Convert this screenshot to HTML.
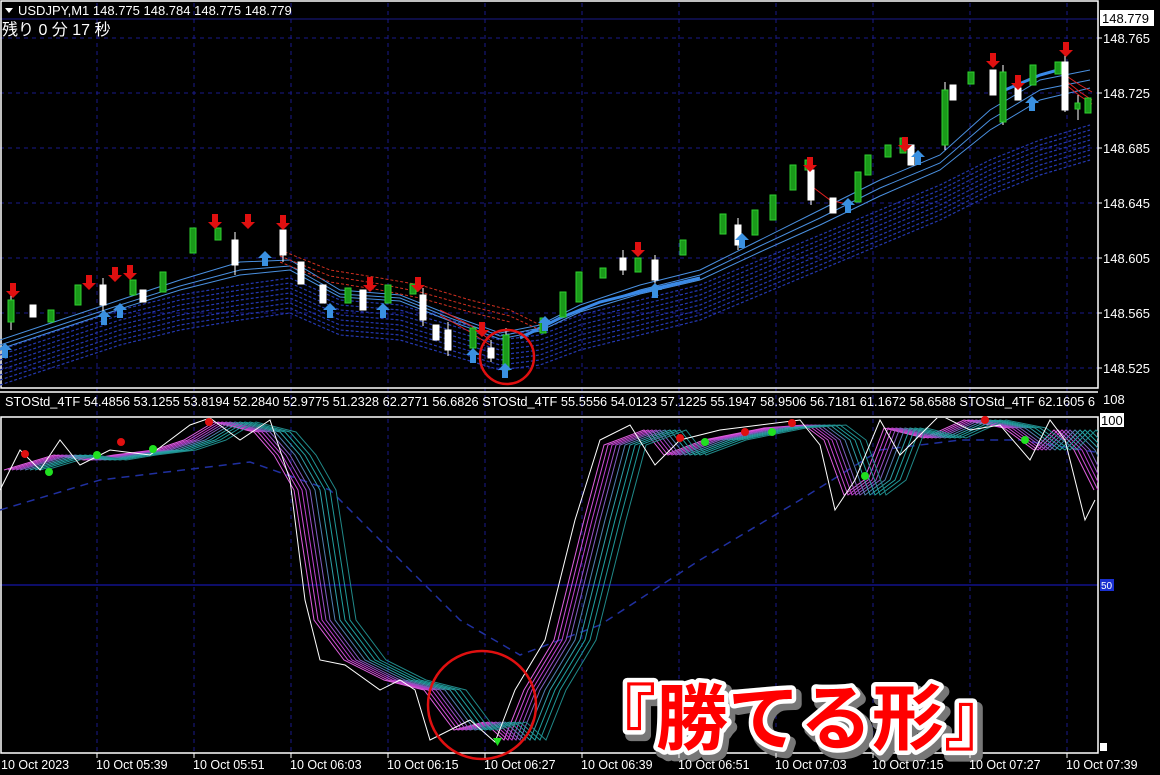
<!DOCTYPE html>
<html><head><meta charset="utf-8"><style>
html,body{margin:0;padding:0;background:#000;width:1160px;height:775px;overflow:hidden}
svg{display:block}
text{font-family:"Liberation Sans","Noto Sans CJK JP",sans-serif}
</style></head><body>
<svg width="1160" height="775" viewBox="0 0 1160 775" xmlns="http://www.w3.org/2000/svg">
<defs>
<clipPath id="ct"><rect x="0" y="2" width="1098" height="386"/></clipPath>
<clipPath id="cb"><rect x="0" y="418" width="1098" height="335"/></clipPath>
<path id="dn" d="M0,0 l-7,-7 h4 v-8 h6 v8 h4z"/>
<path id="up" d="M0,0 l-7,7 h4 v8 h6 v-8 h4z"/>
</defs>
<rect width="1160" height="775" fill="#000"/>
<g stroke="#1a1a8a" stroke-width="1" stroke-dasharray="4,4">
<line x1="97" y1="3" x2="97" y2="753"/><line x1="194" y1="3" x2="194" y2="753"/><line x1="291" y1="3" x2="291" y2="753"/><line x1="388" y1="3" x2="388" y2="753"/><line x1="485" y1="3" x2="485" y2="753"/><line x1="582" y1="3" x2="582" y2="753"/><line x1="679" y1="3" x2="679" y2="753"/><line x1="776" y1="3" x2="776" y2="753"/><line x1="873" y1="3" x2="873" y2="753"/><line x1="970" y1="3" x2="970" y2="753"/><line x1="1067" y1="3" x2="1067" y2="753"/>
<line x1="0" y1="38" x2="1098" y2="38"/><line x1="0" y1="93" x2="1098" y2="93"/><line x1="0" y1="148" x2="1098" y2="148"/><line x1="0" y1="203" x2="1098" y2="203"/><line x1="0" y1="258" x2="1098" y2="258"/><line x1="0" y1="313" x2="1098" y2="313"/><line x1="0" y1="368" x2="1098" y2="368"/>
</g>
<line x1="0" y1="19" x2="1098" y2="19" stroke="#1a1a8a"/>
<line x1="0" y1="585" x2="1098" y2="585" stroke="#1a1ad0"/>
<g stroke="#fff" stroke-width="1.5" fill="none">
<rect x="1" y="1" width="1097" height="387"/>
<rect x="1" y="417" width="1097" height="336"/>
<line x1="0" y1="392" x2="1098" y2="392"/>
</g>
<g clip-path="url(#ct)">
<g fill="none" stroke="#2438b0" stroke-width="1.2" stroke-dasharray="3,2">
<polyline id="rib" points="0,350 60,330 120,310 180,295 240,285 290,278 340,300 400,305 450,320 500,335 540,330 580,315 640,300 700,285 760,260 820,235 880,210 940,185 990,160 1040,140 1090,125"/>
<use href="#rib" y="5"/><use href="#rib" y="10"/><use href="#rib" y="15"/><use href="#rib" y="20"/><use href="#rib" y="25"/><use href="#rib" y="30"/><use href="#rib" y="35"/>
</g>
<g fill="none" stroke="#4a90e0" stroke-width="1">
<polyline points="0,340 60,320 120,300 180,280 240,262 290,260 340,290 400,295 450,315 500,333 540,325 580,305 640,285 700,270 760,240 820,210 880,180 940,155 990,110 1040,80 1090,70"/>
<polyline points="0,345 60,325 120,305 180,286 240,270 290,266 340,294 400,298 450,318 500,336 540,328 580,309 640,290 700,275 760,246 820,218 880,188 940,163 990,120 1040,90 1090,80"/>
<polyline points="0,349 60,329 120,309 180,290 240,275 290,270 340,297 400,301 450,321 500,339 540,331 580,312 640,294 700,280 760,252 820,225 880,196 940,170 990,130 1040,100 1090,88"/>
</g>
<polyline fill="none" stroke="#3a8ae8" stroke-width="3" points="520,338 560,318 600,302 640,292 700,278"/>
<polyline fill="none" stroke="#3a8ae8" stroke-width="3" points="1005,90 1040,75 1058,70"/>
<g fill="none" stroke="#d03020" stroke-width="1" stroke-dasharray="3,2">
<polyline points="280,250 330,270 380,278 420,285 470,300 510,310 540,325"/>
<polyline points="280,256 330,276 380,284 420,292 470,306 510,316 540,330"/>
<polyline points="280,262 330,282 380,290 420,298 470,312 510,322"/>
</g>
<g fill="none" stroke="#e02020" stroke-width="1">
<polyline points="1065,75 1080,85 1092,92"/><polyline points="1065,80 1080,92 1092,100"/><polyline points="1065,84 1080,96 1092,104"/><polyline points="810,185 830,200 850,205"/><polyline points="440,310 470,325 490,340"/><polyline points="440,315 470,332 490,345"/>
</g>
</g>
<g stroke="#fff" stroke-width="1">
<line x1="11" y1="292" x2="11" y2="330"/><line x1="103" y1="278" x2="103" y2="312"/><line x1="235" y1="232" x2="235" y2="275"/><line x1="283" y1="222" x2="283" y2="262"/><line x1="423" y1="288" x2="423" y2="326"/><line x1="448" y1="322" x2="448" y2="356"/><line x1="491" y1="340" x2="491" y2="362"/><line x1="506" y1="328" x2="506" y2="372"/><line x1="623" y1="250" x2="623" y2="275"/><line x1="655" y1="255" x2="655" y2="285"/><line x1="738" y1="218" x2="738" y2="250"/><line x1="811" y1="158" x2="811" y2="205"/><line x1="945" y1="82" x2="945" y2="150"/><line x1="1003" y1="65" x2="1003" y2="125"/><line x1="1065" y1="45" x2="1065" y2="112"/><line x1="1078" y1="95" x2="1078" y2="120"/>
</g>
<g stroke-width="1">
<g fill="#1a9a1a" stroke="#30d030">
<rect x="8" y="300" width="6" height="22"/><rect x="48" y="310" width="6" height="12"/><rect x="75" y="285" width="6" height="20"/><rect x="130" y="280" width="6" height="15"/><rect x="160" y="272" width="6" height="20"/><rect x="190" y="228" width="6" height="25"/><rect x="215" y="228" width="6" height="12"/>
<rect x="345" y="288" width="6" height="15"/><rect x="385" y="285" width="6" height="18"/><rect x="410" y="284" width="6" height="10"/><rect x="470" y="328" width="6" height="20"/><rect x="503" y="335" width="6" height="35"/><rect x="540" y="318" width="6" height="15"/>
<rect x="560" y="292" width="6" height="25"/><rect x="576" y="272" width="6" height="30"/><rect x="600" y="268" width="6" height="10"/><rect x="635" y="258" width="6" height="14"/><rect x="680" y="240" width="6" height="15"/><rect x="720" y="214" width="6" height="20"/>
<rect x="752" y="210" width="6" height="25"/><rect x="770" y="195" width="6" height="25"/><rect x="790" y="165" width="6" height="25"/><rect x="805" y="160" width="6" height="10"/><rect x="855" y="172" width="6" height="30"/><rect x="865" y="155" width="6" height="20"/>
<rect x="885" y="145" width="6" height="12"/><rect x="900" y="138" width="6" height="15"/><rect x="942" y="90" width="6" height="55"/><rect x="968" y="72" width="6" height="12"/><rect x="1000" y="72" width="6" height="50"/><rect x="1030" y="65" width="6" height="20"/>
<rect x="1055" y="62" width="6" height="12"/><rect x="1085" y="98" width="6" height="15"/><rect x="1075" y="103" width="5" height="6"/>
</g>
<g fill="#fff" stroke="#fff">
<rect x="30" y="305" width="6" height="12"/><rect x="100" y="285" width="6" height="20"/><rect x="140" y="290" width="6" height="12"/><rect x="232" y="240" width="6" height="25"/><rect x="280" y="230" width="6" height="25"/><rect x="298" y="262" width="6" height="22"/>
<rect x="320" y="285" width="6" height="18"/><rect x="360" y="290" width="6" height="20"/><rect x="420" y="295" width="6" height="25"/><rect x="433" y="325" width="6" height="15"/><rect x="445" y="330" width="6" height="20"/><rect x="488" y="348" width="6" height="10"/>
<rect x="620" y="258" width="6" height="12"/><rect x="652" y="260" width="6" height="20"/><rect x="735" y="225" width="6" height="20"/><rect x="808" y="170" width="6" height="30"/><rect x="830" y="198" width="6" height="15"/><rect x="908" y="145" width="6" height="20"/>
<rect x="950" y="85" width="6" height="15"/><rect x="990" y="70" width="6" height="25"/><rect x="1015" y="88" width="6" height="12"/><rect x="1062" y="62" width="6" height="48"/>
</g>
</g>
<g fill="#e01010">
<use href="#dn" x="13" y="298"/><use href="#dn" x="89" y="290"/><use href="#dn" x="115" y="282"/><use href="#dn" x="130" y="280"/><use href="#dn" x="215" y="229"/><use href="#dn" x="248" y="229"/><use href="#dn" x="283" y="230"/><use href="#dn" x="370" y="292"/><use href="#dn" x="418" y="292"/><use href="#dn" x="482" y="337"/><use href="#dn" x="638" y="257"/><use href="#dn" x="810" y="172"/><use href="#dn" x="905" y="152"/><use href="#dn" x="993" y="68"/><use href="#dn" x="1018" y="90"/><use href="#dn" x="1066" y="57"/>
</g>
<g fill="#3a90e0">
<use href="#up" x="5" y="343"/><use href="#up" x="104" y="310"/><use href="#up" x="120" y="303"/><use href="#up" x="265" y="251"/><use href="#up" x="330" y="303"/><use href="#up" x="383" y="303"/><use href="#up" x="473" y="348"/><use href="#up" x="505" y="363"/><use href="#up" x="545" y="316"/><use href="#up" x="655" y="283"/><use href="#up" x="742" y="233"/><use href="#up" x="848" y="198"/><use href="#up" x="918" y="150"/><use href="#up" x="1032" y="96"/>
</g>
<circle cx="507" cy="357" r="27" fill="none" stroke="#e01010" stroke-width="2.5"/>
<g clip-path="url(#cb)">
<polyline fill="none" stroke="#2030a0" stroke-width="1.5" stroke-dasharray="8,6" points="0,510 100,480 250,462 330,490 400,560 460,620 520,655 600,625 700,560 800,500 880,450 960,440 1020,440 1095,452"/>
<g fill="none" stroke-width="1">
<polyline id="st" points="0,470 50,455 80,460 110,455 150,450 180,440 210,422 250,432 270,455 290,490 310,620 340,660 380,680 420,690 450,730 480,722 500,740 520,690 550,640 580,520 600,445 640,430 660,455 700,440 760,428 800,425 820,440 840,495 860,480 880,428 920,438 960,420 1000,428 1030,450 1050,430 1070,450 1090,490"/>
<use href="#st" x="4" stroke="#e060e0"/><use href="#st" x="8" stroke="#d050d8"/><use href="#st" x="12" stroke="#c040d0"/><use href="#st" x="16" stroke="#a050c8"/><use href="#st" x="20" stroke="#8060c0"/><use href="#st" x="25" stroke="#5080b0"/><use href="#st" x="30" stroke="#30a0a8"/><use href="#st" x="35" stroke="#20a0a0"/><use href="#st" x="40" stroke="#209898"/><use href="#st" x="46" stroke="#208888"/>
</g>
<polyline fill="none" stroke="#fff" stroke-width="1" points="0,490 20,450 40,470 60,440 80,465 110,450 150,455 190,425 210,418 240,440 270,420 290,480 305,600 320,660 345,665 380,690 400,680 415,690 430,740 470,720 495,742 515,690 545,640 575,520 600,440 630,425 655,465 680,440 720,430 760,425 800,420 820,445 835,510 855,480 880,420 900,455 940,415 970,430 1000,425 1030,460 1050,420 1065,440 1085,520 1095,500"/>
</g>
<g fill="#e01010"><circle cx="25" cy="454" r="4"/><circle cx="121" cy="442" r="4"/><circle cx="209" cy="422" r="4"/><circle cx="680" cy="438" r="4"/><circle cx="745" cy="432" r="4"/><circle cx="792" cy="423" r="4"/><circle cx="985" cy="420" r="4"/></g>
<g fill="#20e020"><circle cx="49" cy="472" r="4"/><circle cx="97" cy="455" r="4"/><circle cx="153" cy="449" r="4"/><circle cx="705" cy="442" r="4"/><circle cx="772" cy="432" r="4"/><circle cx="865" cy="476" r="4"/><circle cx="1025" cy="440" r="4"/><path d="M493,738 h9 l-4.5,8z"/></g>
<circle cx="482" cy="705" r="54" fill="none" stroke="#e01010" stroke-width="2.5"/>
<text x="584" y="744" font-size="72" font-weight="bold" fill="#777" stroke="#777" stroke-width="12" stroke-linejoin="round" transform="translate(4,5)" font-family="'Noto Sans CJK JP',sans-serif">『勝てる形』</text>
<text x="584" y="744" font-size="72" font-weight="bold" fill="#ff0000" stroke="#fff" stroke-width="9" stroke-linejoin="round" paint-order="stroke" font-family="'Noto Sans CJK JP',sans-serif">『勝てる形』</text>
<path d="M5,8 h8 l-4,5z" fill="#fff"/>
<text x="18" y="15" font-size="13" fill="#fff">USDJPY,M1  148.775 148.784 148.775 148.779</text>
<text x="2" y="35" font-size="16" fill="#fff" font-family="'Liberation Mono','Noto Sans CJK JP',monospace">残り 0 分 17 秒</text>
<text x="5" y="406" font-size="12.8" fill="#fff">STOStd_4TF 54.4856 53.1255 53.8194 52.2840 52.9775 51.2328 62.2771 56.6826  STOStd_4TF 55.5556 54.0123 57.1225 55.1947 58.9506 56.7181 61.1672 58.6588  STOStd_4TF 62.1605 6</text>
<rect x="1099" y="393" width="61" height="22" fill="#000"/>
<g font-size="13" fill="#fff">
<rect x="1100" y="10" width="54" height="16" fill="#fff"/><text x="1102" y="23" fill="#000">148.779</text>
<text x="1103" y="43">148.765</text><text x="1103" y="98">148.725</text><text x="1103" y="153">148.685</text><text x="1103" y="208">148.645</text><text x="1103" y="263">148.605</text><text x="1103" y="318">148.565</text><text x="1103" y="373">148.525</text>
<text x="1103" y="404">108</text>
<rect x="1100" y="413" width="24" height="14" fill="#fff"/><text x="1101" y="425" fill="#000">100</text>
<rect x="1100" y="579" width="14" height="12" fill="#1a30d0"/><text x="1101" y="589" font-size="10">50</text>
</g>
<g stroke="#fff"><line x1="1098" y1="38" x2="1102" y2="38"/><line x1="1098" y1="93" x2="1102" y2="93"/><line x1="1098" y1="148" x2="1102" y2="148"/><line x1="1098" y1="203" x2="1102" y2="203"/><line x1="1098" y1="258" x2="1102" y2="258"/><line x1="1098" y1="313" x2="1102" y2="313"/><line x1="1098" y1="368" x2="1102" y2="368"/></g>
<g stroke="#fff"><line x1="97" y1="753" x2="97" y2="758"/><line x1="194" y1="753" x2="194" y2="758"/><line x1="291" y1="753" x2="291" y2="758"/><line x1="388" y1="753" x2="388" y2="758"/><line x1="485" y1="753" x2="485" y2="758"/><line x1="582" y1="753" x2="582" y2="758"/><line x1="679" y1="753" x2="679" y2="758"/><line x1="776" y1="753" x2="776" y2="758"/><line x1="873" y1="753" x2="873" y2="758"/><line x1="970" y1="753" x2="970" y2="758"/><line x1="1067" y1="753" x2="1067" y2="758"/></g>
<g font-size="12.5" fill="#fff">
<text x="1" y="769">10 Oct 2023</text><text x="96" y="769">10 Oct 05:39</text><text x="193" y="769">10 Oct 05:51</text><text x="290" y="769">10 Oct 06:03</text><text x="387" y="769">10 Oct 06:15</text><text x="484" y="769">10 Oct 06:27</text><text x="581" y="769">10 Oct 06:39</text><text x="678" y="769">10 Oct 06:51</text><text x="775" y="769">10 Oct 07:03</text><text x="872" y="769">10 Oct 07:15</text><text x="969" y="769">10 Oct 07:27</text><text x="1066" y="769">10 Oct 07:39</text>
</g>
<rect x="1100" y="743" width="7" height="8" fill="#fff"/>
</svg>
</body></html>
